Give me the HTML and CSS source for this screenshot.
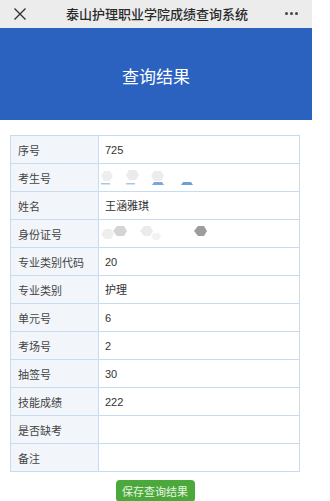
FILE: index.html
```html
<!DOCTYPE html>
<html lang="zh-CN">
<head>
<meta charset="utf-8">
<title>查询结果</title>
<link rel="stylesheet" href="styles.css">
</head>
<body>
<div class="page">
  <div class="topbar">
    <svg class="close" width="14" height="14" viewBox="0 0 14 14"><path d="M1.5 1.5 L12.5 12.5 M12.5 1.5 L1.5 12.5" stroke="#333" stroke-width="1.4" fill="none"/></svg>
    <div class="tb-title">泰山护理职业学院成绩查询系统</div>
    <div class="dots"><span></span><span></span><span></span></div>
  </div>
  <div class="banner">查询结果</div>
  <div class="content">
    <table class="result">
      <tr><th>序号</th><td>725</td></tr>
      <tr><th>考生号</th><td class="mask">
        <svg width="100" height="20" viewBox="0 0 100 20">
          <polygon points="5,3 11,3 14,8 11,13 5,13 2,8" fill="#eeeeee"/>
          <rect x="2" y="15" width="9" height="1.5" fill="#a9c6ea"/>
          <polygon points="30,2 37,2 40,7 37,12 30,12 27,7" fill="#ebebeb"/>
          <rect x="27" y="15" width="9" height="1.5" fill="#a9c6ea"/>
          <polygon points="55,3 62,3 65,8 62,13 55,13 52,8" fill="#ececec"/>
          <polygon points="55,14 63,14 65,17 53,17" fill="#7aa6dc"/>
          <polygon points="84,14 92,14 94,17 82,17" fill="#6f9fdb"/>
        </svg>
      </td></tr>
      <tr><th>姓名</th><td>王涵雅琪</td></tr>
      <tr><th>身份证号</th><td class="mask">
        <svg width="110" height="20" viewBox="0 0 110 20">
          <polygon points="2,10 6,5 12,5 15,10 12,15 6,15" fill="#eeeeee"/>
          <polygon points="14,7 18,2 25,2 28,7 25,12 18,12" fill="#d4d4d4"/>
          <polygon points="41,7 45,2 51,2 54,7 51,12 45,12" fill="#ebebeb"/>
          <polygon points="52,12 55,9 60,9 62,12 60,16 55,16" fill="#f3f3f3"/>
          <polygon points="95,7 99,2 105,2 108,7 105,12 99,12" fill="#9d9d9d"/>
        </svg>
      </td></tr>
      <tr><th>专业类别代码</th><td>20</td></tr>
      <tr><th>专业类别</th><td>护理</td></tr>
      <tr><th>单元号</th><td>6</td></tr>
      <tr><th>考场号</th><td>2</td></tr>
      <tr><th>抽签号</th><td>30</td></tr>
      <tr><th>技能成绩</th><td>222</td></tr>
      <tr><th>是否缺考</th><td></td></tr>
      <tr><th>备注</th><td></td></tr>
    </table>
    <div class="actions"><button class="save">保存查询结果</button></div>
  </div>
</div>
</body>
</html>
```
FILE: styles.css
```css
html, body {
  margin: 0;
  padding: 0;
  background: #ffffff;
}
body {
  font-family: "Noto Sans CJK SC", "Noto Sans", "Liberation Sans", sans-serif;
  color: #333;
}
.page {
  width: 312px;
  height: 501px;
  overflow: hidden;
  background: #ffffff;
}
.topbar {
  height: 28px;
  background: #ececec;
  display: flex;
  align-items: center;
  padding: 0 14px 0 13px;
  box-sizing: border-box;
}
.close {
  flex: none;
  margin-top: -1px;
}
.tb-title {
  flex: 1;
  text-align: center;
  font-size: 13px;
  font-weight: 500;
  color: #2a2a2a;
  margin-left: 2px;
  margin-top: -2px;
}
.dots {
  display: flex;
  gap: 2px;
  margin-top: -2px;
}
.dots span {
  width: 3px;
  height: 3px;
  border-radius: 50%;
  background: #444;
}
.banner {
  height: 92px;
  background: #2b62c0;
  color: #ffffff;
  font-size: 17px;
  display: flex;
  align-items: center;
  justify-content: center;
  padding-top: 2px;
  box-sizing: border-box;
}
.content {
  padding: 15px 12px 0 10px;
}
.result {
  width: 290px;
  border-collapse: collapse;
  table-layout: fixed;
  font-size: 11px;
}
.result th, .result td {
  border: 1px solid #c8dcf1;
  height: 27px;
  padding: 0 0 0 6px;
  text-align: left;
  vertical-align: middle;
  font-weight: normal;
  line-height: 16px;
}
.result th {
  width: 80px;
  background: #f2f6fb;
  color: #444;
  padding-left: 7px;
}
.result td {
  background: #ffffff;
  color: #333;
  font-family: "Liberation Sans", "Noto Sans CJK SC", sans-serif;
}
.result td.mask {
  padding-left: 0;
}
.mask svg {
  display: block;
}
.actions {
  display: flex;
  justify-content: center;
  padding-top: 8px;
}
.save {
  background: #4ba83a;
  color: #e8f5e4;
  border: none;
  border-radius: 4px;
  width: 79px;
  height: 22px;
  font-family: "Noto Sans CJK SC", sans-serif;
  font-size: 11px;
  padding: 0;
}
```
